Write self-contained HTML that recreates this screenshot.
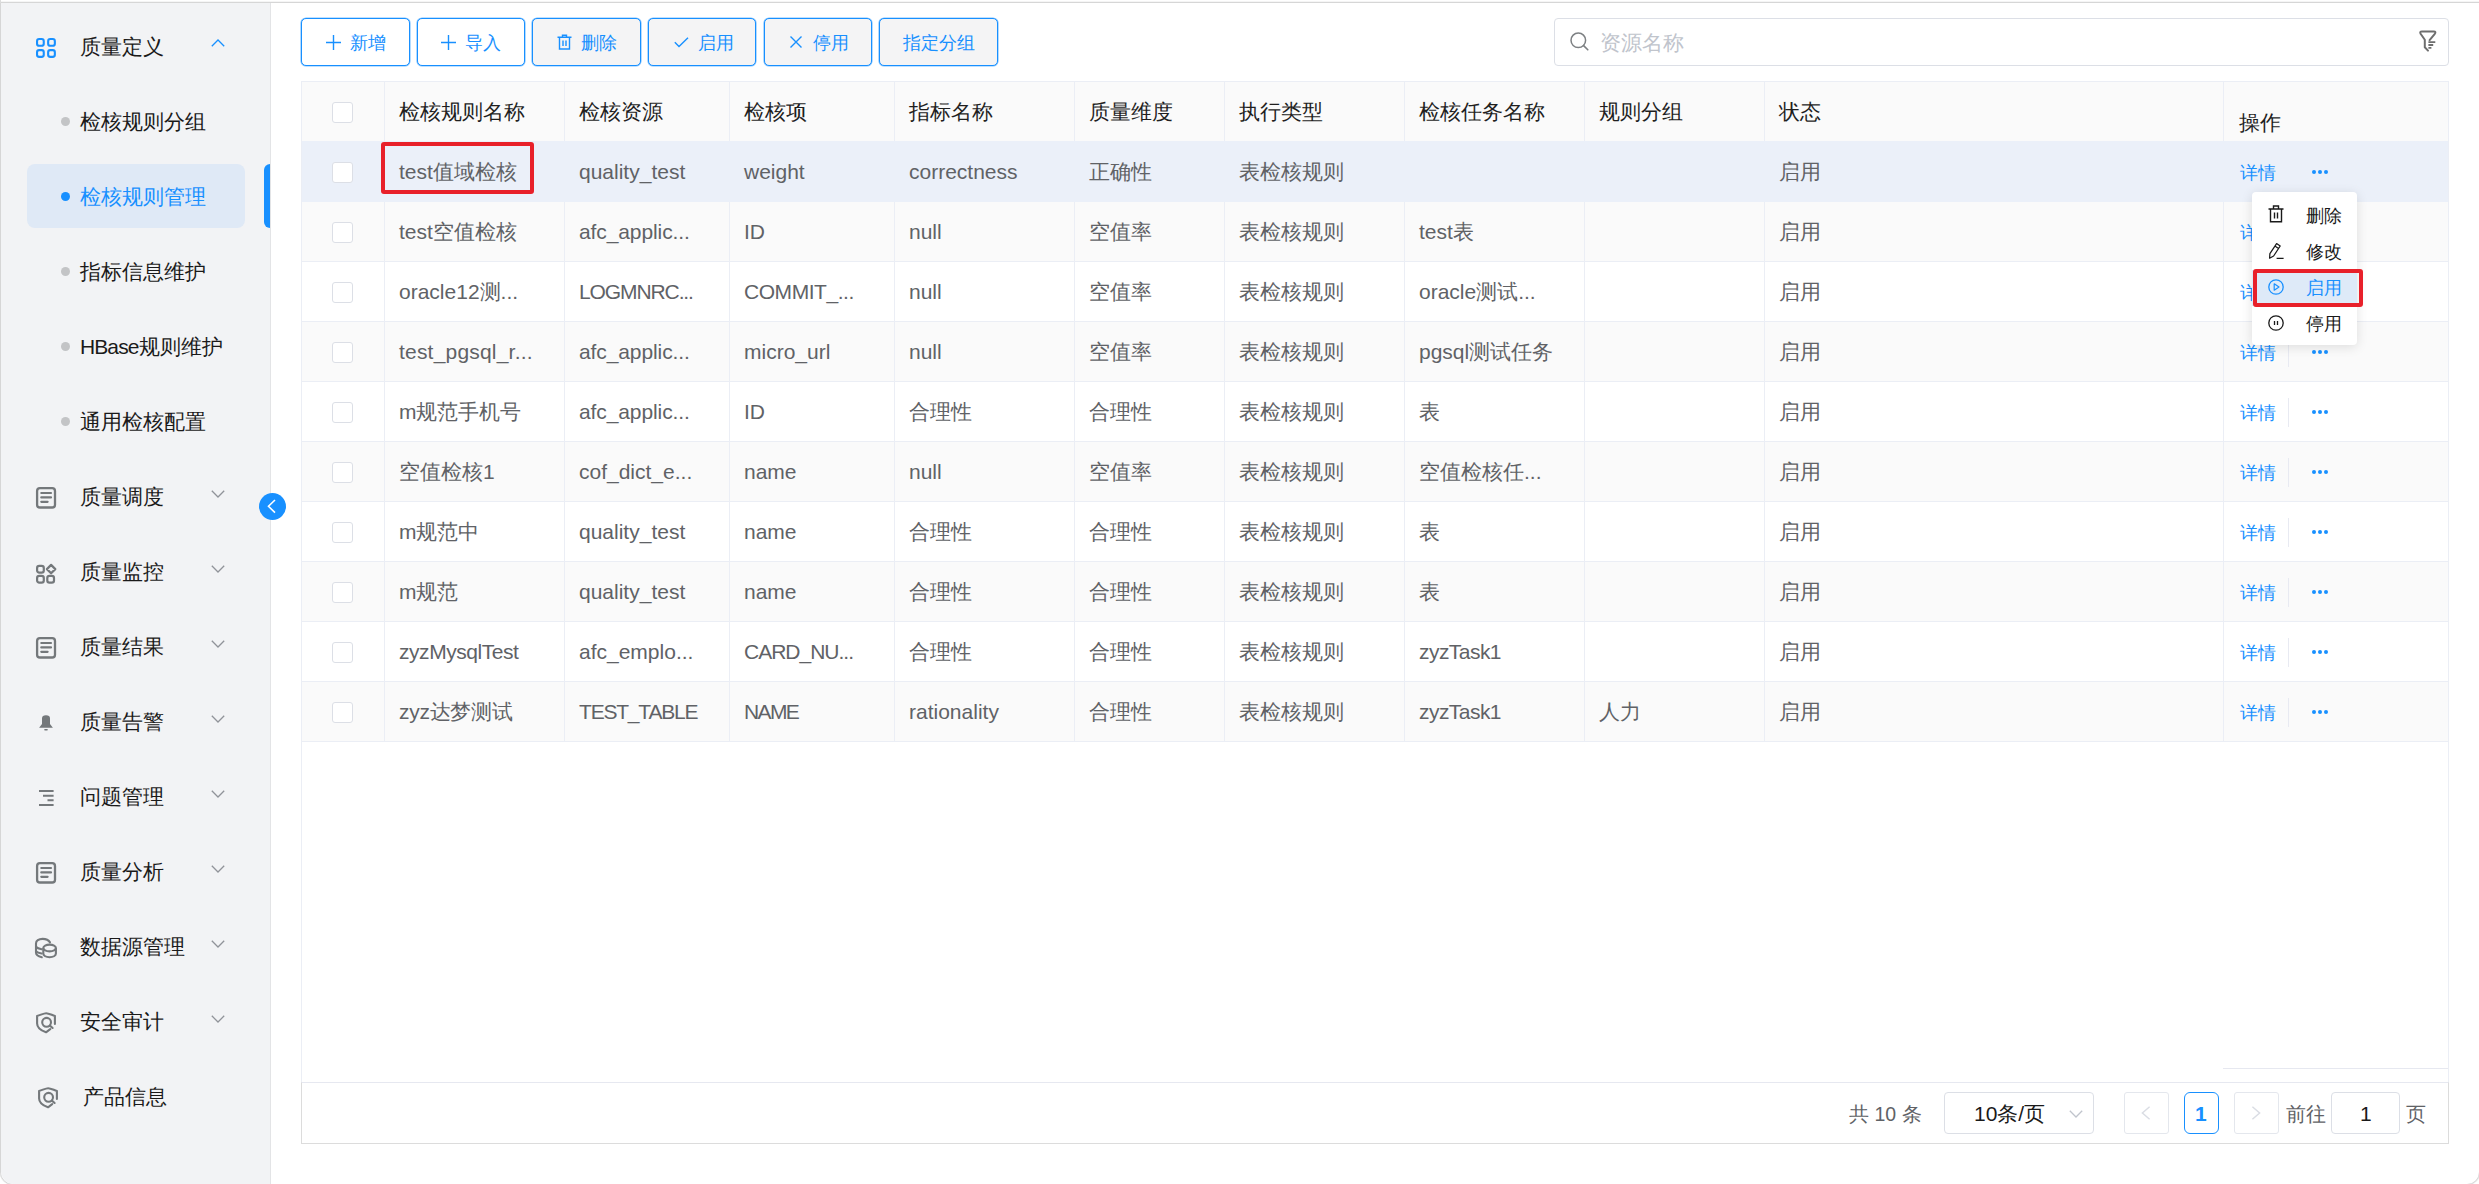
<!DOCTYPE html><html><head><meta charset="utf-8"><style>
*{box-sizing:border-box;margin:0;padding:0}
html,body{width:2479px;height:1184px;overflow:hidden;background:#fff}
body{position:relative;font-family:"Liberation Sans",sans-serif;font-size:21px;color:#222}
.abs{position:absolute}
.t{position:absolute;white-space:nowrap;line-height:30px;height:30px}
svg{position:absolute;overflow:visible}
</style></head><body>
<div class="abs" style="left:0;top:2px;width:2480px;height:1183px;border:1px solid #d6d6d6;border-radius:0 0 13px 13px;background:#fff;box-shadow:0 0 0 0.5px rgba(0,0,0,0.08)"></div><div class="abs" style="left:0;top:0;width:1px;height:3px;background:#dcdcdc"></div><div class="abs" style="left:1px;top:3px;width:270px;height:1181px;background:#f2f3f5;border-right:1px solid #e3e4e6;border-bottom-left-radius:13px"></div><svg style="left:36px;top:38px" width="20" height="20" viewBox="0 0 20 20"><rect x="1.05" y="1.05" width="6.7" height="6.7" rx="2.1" fill="none" stroke="#1890ff" stroke-width="2.1"/><rect x="12.15" y="1.05" width="6.7" height="6.7" rx="2.1" fill="none" stroke="#1890ff" stroke-width="2.1"/><rect x="1.05" y="12.15" width="6.7" height="6.7" rx="2.1" fill="none" stroke="#1890ff" stroke-width="2.1"/><rect x="12.15" y="12.15" width="6.7" height="6.7" rx="2.1" fill="none" stroke="#1890ff" stroke-width="2.1"/></svg><div class="t" style="left:80px;top:32px;color:#1a1a1a;font-size:21px;">质量定义</div><svg style="left:211px;top:39px" width="14" height="8" viewBox="0 0 14 8"><path d="M0.8 7.2 L7 1 L13.2 7.2" fill="none" stroke="#1890ff" stroke-width="1.3"/></svg><div class="abs" style="left:61px;top:116.5px;width:9px;height:9px;border-radius:50%;background:#c3c4c6"></div><div class="t" style="left:80px;top:107px;color:#1a1a1a;font-size:21px;">检核规则分组</div><div class="abs" style="left:27px;top:164px;width:218px;height:64px;background:#dfe9f6;border-radius:8px"></div><div class="abs" style="left:264px;top:164px;width:6px;height:64px;background:#1890ff;border-radius:6px 0 0 6px"></div><div class="abs" style="left:61px;top:191.5px;width:9px;height:9px;border-radius:50%;background:#1890ff"></div><div class="t" style="left:80px;top:182px;color:#1890ff;font-size:21px;">检核规则管理</div><div class="abs" style="left:61px;top:266.5px;width:9px;height:9px;border-radius:50%;background:#c3c4c6"></div><div class="t" style="left:80px;top:257px;color:#1a1a1a;font-size:21px;">指标信息维护</div><div class="abs" style="left:61px;top:341.5px;width:9px;height:9px;border-radius:50%;background:#c3c4c6"></div><div class="t" style="left:80px;top:332px;color:#1a1a1a;font-size:21px;"><span style="letter-spacing:-0.9px">HBase</span>规则维护</div><div class="abs" style="left:61px;top:416.5px;width:9px;height:9px;border-radius:50%;background:#c3c4c6"></div><div class="t" style="left:80px;top:407px;color:#1a1a1a;font-size:21px;">通用检核配置</div><svg style="left:36px;top:487px" width="20" height="21" viewBox="0 0 20 21"><rect x="1.1" y="1.1" width="17.9" height="19.4" rx="2.8" fill="none" stroke="#74787b" stroke-width="2.3"/><path d="M5.3 6 H15 M5.3 10.4 H15 M5.3 14.8 H11.6" stroke="#74787b" stroke-width="2.2" stroke-linecap="round"/></svg><div class="t" style="left:80px;top:482px;color:#1a1a1a;font-size:21px;">质量调度</div><svg style="left:211px;top:490px" width="14" height="8" viewBox="0 0 14 8"><path d="M0.8 0.8 L7 7 L13.2 0.8" fill="none" stroke="#909399" stroke-width="1.3"/></svg><svg style="left:36px;top:564px" width="20" height="20" viewBox="0 0 20 20"><rect x="1.1" y="1.9" width="6.7" height="6.7" rx="2.2" fill="none" stroke="#74787b" stroke-width="2.2"/><rect x="1.1" y="11.9" width="6.7" height="6.7" rx="2.2" fill="none" stroke="#74787b" stroke-width="2.2"/><rect x="11.3" y="11.9" width="6.7" height="6.7" rx="2.2" fill="none" stroke="#74787b" stroke-width="2.2"/><path d="M15.1 0.9 L19.3 5.1 L15.1 9.3 L10.9 5.1 Z" fill="none" stroke="#74787b" stroke-width="2.2" stroke-linejoin="round"/></svg><div class="t" style="left:80px;top:557px;color:#1a1a1a;font-size:21px;">质量监控</div><svg style="left:211px;top:565px" width="14" height="8" viewBox="0 0 14 8"><path d="M0.8 0.8 L7 7 L13.2 0.8" fill="none" stroke="#909399" stroke-width="1.3"/></svg><svg style="left:36px;top:637px" width="20" height="21" viewBox="0 0 20 21"><rect x="1.1" y="1.1" width="17.9" height="19.4" rx="2.8" fill="none" stroke="#74787b" stroke-width="2.3"/><path d="M5.3 6 H15 M5.3 10.4 H15 M5.3 14.8 H11.6" stroke="#74787b" stroke-width="2.2" stroke-linecap="round"/></svg><div class="t" style="left:80px;top:632px;color:#1a1a1a;font-size:21px;">质量结果</div><svg style="left:211px;top:640px" width="14" height="8" viewBox="0 0 14 8"><path d="M0.8 0.8 L7 7 L13.2 0.8" fill="none" stroke="#909399" stroke-width="1.3"/></svg><svg style="left:39px;top:715px" width="14" height="16" viewBox="0 0 14 16"><path d="M3 3.5 Q3 0.2 7 0.2 Q11 0.2 11 3.5 V9 L13.9 12.8 H0.1 L3 9 Z" fill="#74787b"/><rect x="5.2" y="14" width="3.6" height="1.4" rx="0.7" fill="#74787b"/></svg><div class="t" style="left:80px;top:707px;color:#1a1a1a;font-size:21px;">质量告警</div><svg style="left:211px;top:715px" width="14" height="8" viewBox="0 0 14 8"><path d="M0.8 0.8 L7 7 L13.2 0.8" fill="none" stroke="#909399" stroke-width="1.3"/></svg><svg style="left:38.5px;top:790px" width="15" height="16" viewBox="0 0 15 16"><path d="M0 1 H14.6 M4 5.7 H14.6 M8.5 10.2 H14.6 M0 15 H14.6" stroke="#74787b" stroke-width="2"/></svg><div class="t" style="left:80px;top:782px;color:#1a1a1a;font-size:21px;">问题管理</div><svg style="left:211px;top:790px" width="14" height="8" viewBox="0 0 14 8"><path d="M0.8 0.8 L7 7 L13.2 0.8" fill="none" stroke="#909399" stroke-width="1.3"/></svg><svg style="left:36px;top:862px" width="20" height="21" viewBox="0 0 20 21"><rect x="1.1" y="1.1" width="17.9" height="19.4" rx="2.8" fill="none" stroke="#74787b" stroke-width="2.3"/><path d="M5.3 6 H15 M5.3 10.4 H15 M5.3 14.8 H11.6" stroke="#74787b" stroke-width="2.2" stroke-linecap="round"/></svg><div class="t" style="left:80px;top:857px;color:#1a1a1a;font-size:21px;">质量分析</div><svg style="left:211px;top:865px" width="14" height="8" viewBox="0 0 14 8"><path d="M0.8 0.8 L7 7 L13.2 0.8" fill="none" stroke="#909399" stroke-width="1.3"/></svg><svg style="left:35px;top:938px" width="22" height="21" viewBox="0 0 22 21"><path d="M15 4.4 C13.6 2 10.8 0.9 7.6 0.9 C3.6 0.9 1 2.9 1 5.5 V14.6 C1 16.8 3 18.5 6.8 19.3" fill="none" stroke="#74787b" stroke-width="2.1" stroke-linecap="round"/><path d="M1.2 9 C2 10 3.9 10.8 6.6 11.3 M1.2 13.3 C2 14.3 3.9 15.1 6.6 15.5" fill="none" stroke="#74787b" stroke-width="2.1" stroke-linecap="round"/><ellipse cx="14.6" cy="10" rx="6.3" ry="3.4" fill="none" stroke="#74787b" stroke-width="2.1"/><path d="M8.3 10 V15.6 C8.3 17.7 11.1 19.2 14.6 19.2 C18.1 19.2 20.9 17.7 20.9 15.6 V10" fill="none" stroke="#74787b" stroke-width="2.1"/></svg><div class="t" style="left:80px;top:932px;color:#1a1a1a;font-size:21px;">数据源管理</div><svg style="left:211px;top:940px" width="14" height="8" viewBox="0 0 14 8"><path d="M0.8 0.8 L7 7 L13.2 0.8" fill="none" stroke="#909399" stroke-width="1.3"/></svg><svg style="left:36px;top:1012px" width="20" height="22" viewBox="0 0 20 22"><path d="M18.9 12 V4 C15 2.6 12.4 1.2 10.2 1.2 C8 1.2 5.4 2.6 1.1 4 V11.5 C1.1 15.5 5 18.5 10 20.3 L14.2 17.2" fill="none" stroke="#74787b" stroke-width="2.1" stroke-linecap="round" stroke-linejoin="round"/><circle cx="10.6" cy="10.3" r="4.4" fill="none" stroke="#74787b" stroke-width="2.1"/><path d="M13.9 13.6 L16.6 16" stroke="#74787b" stroke-width="2.1" stroke-linecap="round"/></svg><div class="t" style="left:80px;top:1007px;color:#1a1a1a;font-size:21px;">安全审计</div><svg style="left:211px;top:1015px" width="14" height="8" viewBox="0 0 14 8"><path d="M0.8 0.8 L7 7 L13.2 0.8" fill="none" stroke="#909399" stroke-width="1.3"/></svg><svg style="left:38px;top:1087px" width="20" height="22" viewBox="0 0 20 22"><path d="M18.9 12 V4 C15 2.6 12.4 1.2 10.2 1.2 C8 1.2 5.4 2.6 1.1 4 V11.5 C1.1 15.5 5 18.5 10 20.3 L14.2 17.2" fill="none" stroke="#74787b" stroke-width="2.1" stroke-linecap="round" stroke-linejoin="round"/><circle cx="10.6" cy="10.3" r="4.4" fill="none" stroke="#74787b" stroke-width="2.1"/><path d="M13.9 13.6 L16.6 16" stroke="#74787b" stroke-width="2.1" stroke-linecap="round"/></svg><div class="t" style="left:83px;top:1082px;color:#1a1a1a;font-size:21px;">产品信息</div><div class="abs" style="left:259px;top:493px;width:27px;height:27px;border-radius:50%;background:#1890ff"></div><svg style="left:266px;top:499px" width="12" height="15" viewBox="0 0 12 15"><path d="M9 1 L2.5 7.3 L9 13.6" fill="none" stroke="#fff" stroke-width="1.6"/></svg><div class="abs" style="left:301px;top:18px;width:109px;height:48px;border:1px solid #1890ff;box-shadow:0 0 0 0.6px rgba(24,144,255,0.55);border-radius:5px;background:#fff"></div><svg style="left:325.5px;top:35px" width="15" height="15" viewBox="0 0 15 15"><path d="M7.5 0 V15 M0 7.5 H15" stroke="#1890ff" stroke-width="1.4"/></svg><div class="t" style="left:349.5px;top:28px;color:#1890ff;font-size:18px;">新增</div><div class="abs" style="left:417px;top:18px;width:108px;height:48px;border:1px solid #1890ff;box-shadow:0 0 0 0.6px rgba(24,144,255,0.55);border-radius:5px;background:#fff"></div><svg style="left:441.0px;top:35px" width="15" height="15" viewBox="0 0 15 15"><path d="M7.5 0 V15 M0 7.5 H15" stroke="#1890ff" stroke-width="1.4"/></svg><div class="t" style="left:465.0px;top:28px;color:#1890ff;font-size:18px;">导入</div><div class="abs" style="left:532px;top:18px;width:109px;height:48px;border:1px solid #1890ff;box-shadow:0 0 0 0.6px rgba(24,144,255,0.55);border-radius:5px;background:#f4f4f5"></div><svg style="left:556.5px;top:34px" width="15" height="16" viewBox="0 0 15 16"><path d="M0.5 3.2 H14.5 M5.5 3 V1.2 H9.5 V3 M2.5 3.5 V15 H12.5 V3.5 M6 6.5 V12 M9 6.5 V12" fill="none" stroke="#1890ff" stroke-width="1.4"/></svg><div class="t" style="left:580.5px;top:28px;color:#1890ff;font-size:18px;">删除</div><div class="abs" style="left:648px;top:18px;width:108px;height:48px;border:1px solid #1890ff;box-shadow:0 0 0 0.6px rgba(24,144,255,0.55);border-radius:5px;background:#f4f4f5"></div><svg style="left:673.5px;top:37px" width="15" height="11" viewBox="0 0 15 11"><path d="M0.8 5.2 L5 9.5 L14 0.8" fill="none" stroke="#1890ff" stroke-width="1.4"/></svg><div class="t" style="left:697.5px;top:28px;color:#1890ff;font-size:18px;">启用</div><div class="abs" style="left:764px;top:18px;width:108px;height:48px;border:1px solid #1890ff;box-shadow:0 0 0 0.6px rgba(24,144,255,0.55);border-radius:5px;background:#f4f4f5"></div><svg style="left:790.0px;top:36px" width="12" height="12" viewBox="0 0 12 12"><path d="M0.5 0.5 L11.5 11.5 M11.5 0.5 L0.5 11.5" fill="none" stroke="#1890ff" stroke-width="1.4"/></svg><div class="t" style="left:813.0px;top:28px;color:#1890ff;font-size:18px;">停用</div><div class="abs" style="left:879px;top:18px;width:119px;height:48px;border:1px solid #1890ff;box-shadow:0 0 0 0.6px rgba(24,144,255,0.55);border-radius:5px;background:#f4f4f5"></div><div class="t" style="left:902.5px;top:28px;color:#1890ff;font-size:18px;">指定分组</div><div class="abs" style="left:1554px;top:18px;width:895px;height:48px;border:1px solid #dcdfe6;border-radius:4px;background:#fff"></div><svg style="left:1570px;top:32px" width="19" height="19" viewBox="0 0 19 19"><circle cx="8.3" cy="8.3" r="7.3" fill="none" stroke="#7d8083" stroke-width="1.5"/><path d="M13.6 13.6 L17.8 17.8" stroke="#7d8083" stroke-width="1.6" stroke-linecap="round"/></svg><div class="t" style="left:1600px;top:28px;color:#c0c4cc;font-size:21px;">资源名称</div><svg style="left:2419px;top:30px" width="18" height="22" viewBox="0 0 18 22"><path d="M14.8 1.5 H3 Q0.4 1.5 1.6 3.8 L5.8 9.8 V17.3 L9 20.6 M10.6 10.2 L15.8 3.8 Q17.4 1.5 14.8 1.5" fill="none" stroke="#6e6e6e" stroke-width="2" stroke-linecap="round" stroke-linejoin="round"/><path d="M9.4 12.1 H16.3 M9.4 15 H14.2 M9.4 17.8 H12.4" stroke="#6e6e6e" stroke-width="1.8"/></svg><div class="abs" style="left:301px;top:81px;width:2148px;height:1002px;border:1px solid #ebeef5;background:#fff"></div><div class="abs" style="left:302px;top:82px;width:2146px;height:60px;background:#fafafa"></div><div class="abs" style="left:302px;top:141px;width:2146px;height:61px;background:#fff;border-top:1px solid #ebeef5;border-bottom:1px solid #ebeef5"></div><div class="abs" style="left:302px;top:201px;width:2146px;height:61px;background:#fafafa;border-top:1px solid #ebeef5;border-bottom:1px solid #ebeef5"></div><div class="abs" style="left:302px;top:261px;width:2146px;height:61px;background:#fff;border-top:1px solid #ebeef5;border-bottom:1px solid #ebeef5"></div><div class="abs" style="left:302px;top:321px;width:2146px;height:61px;background:#fafafa;border-top:1px solid #ebeef5;border-bottom:1px solid #ebeef5"></div><div class="abs" style="left:302px;top:381px;width:2146px;height:61px;background:#fff;border-top:1px solid #ebeef5;border-bottom:1px solid #ebeef5"></div><div class="abs" style="left:302px;top:441px;width:2146px;height:61px;background:#fafafa;border-top:1px solid #ebeef5;border-bottom:1px solid #ebeef5"></div><div class="abs" style="left:302px;top:501px;width:2146px;height:61px;background:#fff;border-top:1px solid #ebeef5;border-bottom:1px solid #ebeef5"></div><div class="abs" style="left:302px;top:561px;width:2146px;height:61px;background:#fafafa;border-top:1px solid #ebeef5;border-bottom:1px solid #ebeef5"></div><div class="abs" style="left:302px;top:621px;width:2146px;height:61px;background:#fff;border-top:1px solid #ebeef5;border-bottom:1px solid #ebeef5"></div><div class="abs" style="left:302px;top:681px;width:2146px;height:61px;background:#fafafa;border-top:1px solid #ebeef5;border-bottom:1px solid #ebeef5"></div><div class="abs" style="left:384px;top:81px;width:1px;height:660px;background:#ebeef5"></div><div class="abs" style="left:564px;top:81px;width:1px;height:660px;background:#ebeef5"></div><div class="abs" style="left:729px;top:81px;width:1px;height:660px;background:#ebeef5"></div><div class="abs" style="left:894px;top:81px;width:1px;height:660px;background:#ebeef5"></div><div class="abs" style="left:1074px;top:81px;width:1px;height:660px;background:#ebeef5"></div><div class="abs" style="left:1224px;top:81px;width:1px;height:660px;background:#ebeef5"></div><div class="abs" style="left:1404px;top:81px;width:1px;height:660px;background:#ebeef5"></div><div class="abs" style="left:1584px;top:81px;width:1px;height:660px;background:#ebeef5"></div><div class="abs" style="left:1764px;top:81px;width:1px;height:660px;background:#ebeef5"></div><div class="abs" style="left:2223px;top:81px;width:1px;height:660px;background:#ebeef5"></div><div class="abs" style="left:2223px;top:1068px;width:225px;height:1px;background:#e6e8f0"></div><div class="abs" style="left:302px;top:141px;width:2146px;height:61px;background:#ebf0f9"></div><div class="t" style="left:399px;top:97px;color:#1f1f1f;font-size:21px;">检核规则名称</div><div class="t" style="left:579px;top:97px;color:#1f1f1f;font-size:21px;">检核资源</div><div class="t" style="left:744px;top:97px;color:#1f1f1f;font-size:21px;">检核项</div><div class="t" style="left:909px;top:97px;color:#1f1f1f;font-size:21px;">指标名称</div><div class="t" style="left:1089px;top:97px;color:#1f1f1f;font-size:21px;">质量维度</div><div class="t" style="left:1239px;top:97px;color:#1f1f1f;font-size:21px;">执行类型</div><div class="t" style="left:1419px;top:97px;color:#1f1f1f;font-size:21px;">检核任务名称</div><div class="t" style="left:1599px;top:97px;color:#1f1f1f;font-size:21px;">规则分组</div><div class="t" style="left:1779px;top:97px;color:#1f1f1f;font-size:21px;">状态</div><div class="t" style="left:2239px;top:108px;color:#1f1f1f;font-size:21px;">操作</div><div class="abs" style="left:332px;top:102px;width:21px;height:21px;border:1px solid #dcdfe6;border-radius:3px;background:#fff"></div><div class="abs" style="left:332px;top:162px;width:21px;height:21px;border:1px solid #dcdfe6;border-radius:3px;background:#fff"></div><div class="abs" style="left:332px;top:222px;width:21px;height:21px;border:1px solid #dcdfe6;border-radius:3px;background:#fff"></div><div class="abs" style="left:332px;top:282px;width:21px;height:21px;border:1px solid #dcdfe6;border-radius:3px;background:#fff"></div><div class="abs" style="left:332px;top:342px;width:21px;height:21px;border:1px solid #dcdfe6;border-radius:3px;background:#fff"></div><div class="abs" style="left:332px;top:402px;width:21px;height:21px;border:1px solid #dcdfe6;border-radius:3px;background:#fff"></div><div class="abs" style="left:332px;top:462px;width:21px;height:21px;border:1px solid #dcdfe6;border-radius:3px;background:#fff"></div><div class="abs" style="left:332px;top:522px;width:21px;height:21px;border:1px solid #dcdfe6;border-radius:3px;background:#fff"></div><div class="abs" style="left:332px;top:582px;width:21px;height:21px;border:1px solid #dcdfe6;border-radius:3px;background:#fff"></div><div class="abs" style="left:332px;top:642px;width:21px;height:21px;border:1px solid #dcdfe6;border-radius:3px;background:#fff"></div><div class="abs" style="left:332px;top:702px;width:21px;height:21px;border:1px solid #dcdfe6;border-radius:3px;background:#fff"></div><div class="t" style="left:399px;top:157px;color:#606266;font-size:21px;">test值域检核</div><div class="t" style="left:579px;top:157px;color:#606266;font-size:21px;">quality_test</div><div class="t" style="left:744px;top:157px;color:#606266;font-size:21px;">weight</div><div class="t" style="left:909px;top:157px;color:#606266;font-size:21px;">correctness</div><div class="t" style="left:1089px;top:157px;color:#606266;font-size:21px;">正确性</div><div class="t" style="left:1239px;top:157px;color:#606266;font-size:21px;">表检核规则</div><div class="t" style="left:1779px;top:157px;color:#606266;font-size:21px;">启用</div><div class="t" style="left:2240px;top:158px;color:#1890ff;font-size:18px;">详情</div><div class="abs" style="left:2312px;top:170px;width:4px;height:4px;border-radius:50%;background:#1890ff"></div><div class="abs" style="left:2318px;top:170px;width:4px;height:4px;border-radius:50%;background:#1890ff"></div><div class="abs" style="left:2324px;top:170px;width:4px;height:4px;border-radius:50%;background:#1890ff"></div><div class="t" style="left:399px;top:217px;color:#606266;font-size:21px;">test空值检核</div><div class="t" style="left:579px;top:217px;color:#606266;font-size:21px;letter-spacing:-0.1px">afc_applic...</div><div class="t" style="left:744px;top:217px;color:#606266;font-size:21px;">ID</div><div class="t" style="left:909px;top:217px;color:#606266;font-size:21px;">null</div><div class="t" style="left:1089px;top:217px;color:#606266;font-size:21px;">空值率</div><div class="t" style="left:1239px;top:217px;color:#606266;font-size:21px;">表检核规则</div><div class="t" style="left:1419px;top:217px;color:#606266;font-size:21px;">test表</div><div class="t" style="left:1779px;top:217px;color:#606266;font-size:21px;">启用</div><div class="t" style="left:2240px;top:218px;color:#1890ff;font-size:18px;">详情</div><div class="abs" style="left:2288px;top:218px;width:1px;height:29px;background:#e8eaf2"></div><div class="abs" style="left:2312px;top:230px;width:4px;height:4px;border-radius:50%;background:#1890ff"></div><div class="abs" style="left:2318px;top:230px;width:4px;height:4px;border-radius:50%;background:#1890ff"></div><div class="abs" style="left:2324px;top:230px;width:4px;height:4px;border-radius:50%;background:#1890ff"></div><div class="t" style="left:399px;top:277px;color:#606266;font-size:21px;">oracle12测...</div><div class="t" style="left:579px;top:277px;color:#606266;font-size:21px;letter-spacing:-1.1px">LOGMNRC...</div><div class="t" style="left:744px;top:277px;color:#606266;font-size:21px;letter-spacing:-0.45px">COMMIT_...</div><div class="t" style="left:909px;top:277px;color:#606266;font-size:21px;">null</div><div class="t" style="left:1089px;top:277px;color:#606266;font-size:21px;">空值率</div><div class="t" style="left:1239px;top:277px;color:#606266;font-size:21px;">表检核规则</div><div class="t" style="left:1419px;top:277px;color:#606266;font-size:21px;">oracle测试...</div><div class="t" style="left:1779px;top:277px;color:#606266;font-size:21px;">启用</div><div class="t" style="left:2240px;top:278px;color:#1890ff;font-size:18px;">详情</div><div class="abs" style="left:2288px;top:278px;width:1px;height:29px;background:#e8eaf2"></div><div class="abs" style="left:2312px;top:290px;width:4px;height:4px;border-radius:50%;background:#1890ff"></div><div class="abs" style="left:2318px;top:290px;width:4px;height:4px;border-radius:50%;background:#1890ff"></div><div class="abs" style="left:2324px;top:290px;width:4px;height:4px;border-radius:50%;background:#1890ff"></div><div class="t" style="left:399px;top:337px;color:#606266;font-size:21px;letter-spacing:0.2px">test_pgsql_r...</div><div class="t" style="left:579px;top:337px;color:#606266;font-size:21px;letter-spacing:-0.1px">afc_applic...</div><div class="t" style="left:744px;top:337px;color:#606266;font-size:21px;">micro_url</div><div class="t" style="left:909px;top:337px;color:#606266;font-size:21px;">null</div><div class="t" style="left:1089px;top:337px;color:#606266;font-size:21px;">空值率</div><div class="t" style="left:1239px;top:337px;color:#606266;font-size:21px;">表检核规则</div><div class="t" style="left:1419px;top:337px;color:#606266;font-size:21px;">pgsql测试任务</div><div class="t" style="left:1779px;top:337px;color:#606266;font-size:21px;">启用</div><div class="t" style="left:2240px;top:338px;color:#1890ff;font-size:18px;">详情</div><div class="abs" style="left:2288px;top:338px;width:1px;height:29px;background:#e8eaf2"></div><div class="abs" style="left:2312px;top:350px;width:4px;height:4px;border-radius:50%;background:#1890ff"></div><div class="abs" style="left:2318px;top:350px;width:4px;height:4px;border-radius:50%;background:#1890ff"></div><div class="abs" style="left:2324px;top:350px;width:4px;height:4px;border-radius:50%;background:#1890ff"></div><div class="t" style="left:399px;top:397px;color:#606266;font-size:21px;">m规范手机号</div><div class="t" style="left:579px;top:397px;color:#606266;font-size:21px;letter-spacing:-0.1px">afc_applic...</div><div class="t" style="left:744px;top:397px;color:#606266;font-size:21px;">ID</div><div class="t" style="left:909px;top:397px;color:#606266;font-size:21px;">合理性</div><div class="t" style="left:1089px;top:397px;color:#606266;font-size:21px;">合理性</div><div class="t" style="left:1239px;top:397px;color:#606266;font-size:21px;">表检核规则</div><div class="t" style="left:1419px;top:397px;color:#606266;font-size:21px;">表</div><div class="t" style="left:1779px;top:397px;color:#606266;font-size:21px;">启用</div><div class="t" style="left:2240px;top:398px;color:#1890ff;font-size:18px;">详情</div><div class="abs" style="left:2288px;top:398px;width:1px;height:29px;background:#e8eaf2"></div><div class="abs" style="left:2312px;top:410px;width:4px;height:4px;border-radius:50%;background:#1890ff"></div><div class="abs" style="left:2318px;top:410px;width:4px;height:4px;border-radius:50%;background:#1890ff"></div><div class="abs" style="left:2324px;top:410px;width:4px;height:4px;border-radius:50%;background:#1890ff"></div><div class="t" style="left:399px;top:457px;color:#606266;font-size:21px;">空值检核1</div><div class="t" style="left:579px;top:457px;color:#606266;font-size:21px;">cof_dict_e...</div><div class="t" style="left:744px;top:457px;color:#606266;font-size:21px;">name</div><div class="t" style="left:909px;top:457px;color:#606266;font-size:21px;">null</div><div class="t" style="left:1089px;top:457px;color:#606266;font-size:21px;">空值率</div><div class="t" style="left:1239px;top:457px;color:#606266;font-size:21px;">表检核规则</div><div class="t" style="left:1419px;top:457px;color:#606266;font-size:21px;">空值检核任...</div><div class="t" style="left:1779px;top:457px;color:#606266;font-size:21px;">启用</div><div class="t" style="left:2240px;top:458px;color:#1890ff;font-size:18px;">详情</div><div class="abs" style="left:2288px;top:458px;width:1px;height:29px;background:#e8eaf2"></div><div class="abs" style="left:2312px;top:470px;width:4px;height:4px;border-radius:50%;background:#1890ff"></div><div class="abs" style="left:2318px;top:470px;width:4px;height:4px;border-radius:50%;background:#1890ff"></div><div class="abs" style="left:2324px;top:470px;width:4px;height:4px;border-radius:50%;background:#1890ff"></div><div class="t" style="left:399px;top:517px;color:#606266;font-size:21px;">m规范中</div><div class="t" style="left:579px;top:517px;color:#606266;font-size:21px;">quality_test</div><div class="t" style="left:744px;top:517px;color:#606266;font-size:21px;">name</div><div class="t" style="left:909px;top:517px;color:#606266;font-size:21px;">合理性</div><div class="t" style="left:1089px;top:517px;color:#606266;font-size:21px;">合理性</div><div class="t" style="left:1239px;top:517px;color:#606266;font-size:21px;">表检核规则</div><div class="t" style="left:1419px;top:517px;color:#606266;font-size:21px;">表</div><div class="t" style="left:1779px;top:517px;color:#606266;font-size:21px;">启用</div><div class="t" style="left:2240px;top:518px;color:#1890ff;font-size:18px;">详情</div><div class="abs" style="left:2288px;top:518px;width:1px;height:29px;background:#e8eaf2"></div><div class="abs" style="left:2312px;top:530px;width:4px;height:4px;border-radius:50%;background:#1890ff"></div><div class="abs" style="left:2318px;top:530px;width:4px;height:4px;border-radius:50%;background:#1890ff"></div><div class="abs" style="left:2324px;top:530px;width:4px;height:4px;border-radius:50%;background:#1890ff"></div><div class="t" style="left:399px;top:577px;color:#606266;font-size:21px;">m规范</div><div class="t" style="left:579px;top:577px;color:#606266;font-size:21px;">quality_test</div><div class="t" style="left:744px;top:577px;color:#606266;font-size:21px;">name</div><div class="t" style="left:909px;top:577px;color:#606266;font-size:21px;">合理性</div><div class="t" style="left:1089px;top:577px;color:#606266;font-size:21px;">合理性</div><div class="t" style="left:1239px;top:577px;color:#606266;font-size:21px;">表检核规则</div><div class="t" style="left:1419px;top:577px;color:#606266;font-size:21px;">表</div><div class="t" style="left:1779px;top:577px;color:#606266;font-size:21px;">启用</div><div class="t" style="left:2240px;top:578px;color:#1890ff;font-size:18px;">详情</div><div class="abs" style="left:2288px;top:578px;width:1px;height:29px;background:#e8eaf2"></div><div class="abs" style="left:2312px;top:590px;width:4px;height:4px;border-radius:50%;background:#1890ff"></div><div class="abs" style="left:2318px;top:590px;width:4px;height:4px;border-radius:50%;background:#1890ff"></div><div class="abs" style="left:2324px;top:590px;width:4px;height:4px;border-radius:50%;background:#1890ff"></div><div class="t" style="left:399px;top:637px;color:#606266;font-size:21px;letter-spacing:-0.45px">zyzMysqlTest</div><div class="t" style="left:579px;top:637px;color:#606266;font-size:21px;">afc_emplo...</div><div class="t" style="left:744px;top:637px;color:#606266;font-size:21px;letter-spacing:-1.0px">CARD_NU...</div><div class="t" style="left:909px;top:637px;color:#606266;font-size:21px;">合理性</div><div class="t" style="left:1089px;top:637px;color:#606266;font-size:21px;">合理性</div><div class="t" style="left:1239px;top:637px;color:#606266;font-size:21px;">表检核规则</div><div class="t" style="left:1419px;top:637px;color:#606266;font-size:21px;letter-spacing:-0.55px">zyzTask1</div><div class="t" style="left:1779px;top:637px;color:#606266;font-size:21px;">启用</div><div class="t" style="left:2240px;top:638px;color:#1890ff;font-size:18px;">详情</div><div class="abs" style="left:2288px;top:638px;width:1px;height:29px;background:#e8eaf2"></div><div class="abs" style="left:2312px;top:650px;width:4px;height:4px;border-radius:50%;background:#1890ff"></div><div class="abs" style="left:2318px;top:650px;width:4px;height:4px;border-radius:50%;background:#1890ff"></div><div class="abs" style="left:2324px;top:650px;width:4px;height:4px;border-radius:50%;background:#1890ff"></div><div class="t" style="left:399px;top:697px;color:#606266;font-size:21px;letter-spacing:-0.3px">zyz达梦测试</div><div class="t" style="left:579px;top:697px;color:#606266;font-size:21px;letter-spacing:-1.2px">TEST_TABLE</div><div class="t" style="left:744px;top:697px;color:#606266;font-size:21px;letter-spacing:-1.6px">NAME</div><div class="t" style="left:909px;top:697px;color:#606266;font-size:21px;">rationality</div><div class="t" style="left:1089px;top:697px;color:#606266;font-size:21px;">合理性</div><div class="t" style="left:1239px;top:697px;color:#606266;font-size:21px;">表检核规则</div><div class="t" style="left:1419px;top:697px;color:#606266;font-size:21px;letter-spacing:-0.55px">zyzTask1</div><div class="t" style="left:1599px;top:697px;color:#606266;font-size:21px;">人力</div><div class="t" style="left:1779px;top:697px;color:#606266;font-size:21px;">启用</div><div class="t" style="left:2240px;top:698px;color:#1890ff;font-size:18px;">详情</div><div class="abs" style="left:2288px;top:698px;width:1px;height:29px;background:#e8eaf2"></div><div class="abs" style="left:2312px;top:710px;width:4px;height:4px;border-radius:50%;background:#1890ff"></div><div class="abs" style="left:2318px;top:710px;width:4px;height:4px;border-radius:50%;background:#1890ff"></div><div class="abs" style="left:2324px;top:710px;width:4px;height:4px;border-radius:50%;background:#1890ff"></div><div class="abs" style="left:301px;top:1082px;width:2148px;height:62px;border:1px solid #dcdcdc;border-top:1px solid #e6e8f0;background:#fff"></div><div class="t" style="left:1849px;top:1099px;color:#606266;font-size:19.5px;">共 10 条</div><div class="abs" style="left:1944px;top:1092px;width:150px;height:42px;border:1px solid #dcdfe6;border-radius:4px;background:#fff"></div><div class="t" style="left:1974px;top:1099px;color:#1a1a1a;font-size:21px;">10条/页</div><svg style="left:2069px;top:1110px" width="14" height="8" viewBox="0 0 14 8"><path d="M0.8 0.8 L7 7 L13.2 0.8" fill="none" stroke="#c0c4cc" stroke-width="1.3"/></svg><div class="abs" style="left:2124px;top:1092px;width:45px;height:42px;border:1px solid #e4e7ed;border-radius:3px;background:#fff"></div><svg style="left:2141px;top:1106px" width="10" height="14" viewBox="0 0 10 14"><path d="M8.6 0.8 L1.4 7 L8.6 13.2" fill="none" stroke="#dadde4" stroke-width="1.5"/></svg><div class="abs" style="left:2184px;top:1092px;width:35px;height:42px;border:1.5px solid #1890ff;border-radius:6px;background:#fff"></div><div class="t" style="left:2195px;top:1099px;color:#1890ff;font-size:21px;font-weight:bold">1</div><div class="abs" style="left:2234px;top:1092px;width:45px;height:42px;border:1px solid #e4e7ed;border-radius:3px;background:#fff"></div><svg style="left:2251px;top:1106px" width="10" height="14" viewBox="0 0 10 14"><path d="M1.4 0.8 L8.6 7 L1.4 13.2" fill="none" stroke="#dadde4" stroke-width="1.5"/></svg><div class="t" style="left:2286px;top:1099px;color:#606266;font-size:19.5px;">前往</div><div class="abs" style="left:2331px;top:1092px;width:69px;height:42px;border:1px solid #dcdfe6;border-radius:4px;background:#fff"></div><div class="t" style="left:2360px;top:1099px;color:#1a1a1a;font-size:21px;">1</div><div class="t" style="left:2406px;top:1099px;color:#606266;font-size:19.5px;">页</div><div class="abs" style="left:2252px;top:192px;width:105px;height:153px;background:#fff;border-radius:4px;box-shadow:0 2px 12px rgba(0,0,0,0.12)"></div><div class="abs" style="left:2252px;top:270px;width:105px;height:36px;background:#deeaf8"></div><svg style="left:2268px;top:205px" width="16" height="18" viewBox="0 0 16 18"><path d="M0.5 4 H15.5 M5.5 3.5 V1 H10.5 V3.5 M2.5 4.5 V16.8 H13.5 V4.5 M6.5 7.5 V13.5 M9.5 7.5 V13.5" fill="none" stroke="#1a1a1a" stroke-width="1.4"/></svg><div class="t" style="left:2306px;top:201px;color:#1a1a1a;font-size:18px;">删除</div><svg style="left:2268px;top:243px" width="17" height="18" viewBox="0 0 17 18"><path d="M8.6 0.6 L12.2 3 L5.6 13 L1.6 15.2 L1.9 10.6 Z M6.9 3 L10.5 5.4 M8.6 15.4 H15.6" fill="none" stroke="#1a1a1a" stroke-width="1.25" stroke-linejoin="round"/></svg><div class="t" style="left:2306px;top:237px;color:#1a1a1a;font-size:18px;">修改</div><svg style="left:2268px;top:279px" width="16" height="16" viewBox="0 0 16 16"><circle cx="8" cy="8" r="7.2" fill="none" stroke="#1890ff" stroke-width="1.3"/><path d="M6.2 4.8 L11 8 L6.2 11.2 Z" fill="none" stroke="#1890ff" stroke-width="1.2" stroke-linejoin="round"/></svg><div class="t" style="left:2306px;top:273px;color:#1890ff;font-size:18px;">启用</div><svg style="left:2268px;top:315px" width="16" height="16" viewBox="0 0 16 16"><circle cx="8" cy="8" r="7.2" fill="none" stroke="#1a1a1a" stroke-width="1.3"/><path d="M6.5 6 V10 M9.5 6 V10" stroke="#1a1a1a" stroke-width="1.3"/></svg><div class="t" style="left:2306px;top:309px;color:#1a1a1a;font-size:18px;">停用</div><div class="abs" style="left:381px;top:142px;width:153px;height:52px;border:4px solid #e8202a;border-radius:3px"></div><div class="abs" style="left:2253px;top:269px;width:110px;height:38px;border:4px solid #e8202a;border-radius:3px"></div></body></html>
